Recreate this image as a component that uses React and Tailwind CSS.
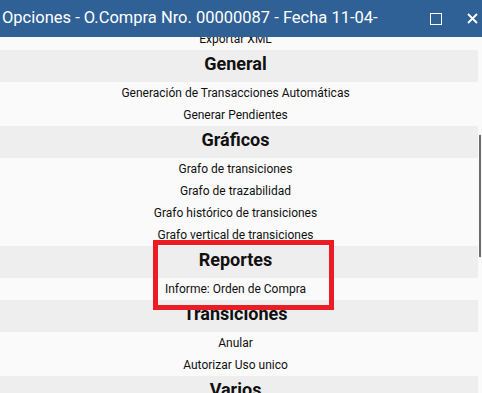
import React from "react";

const sections = [
  { title: null, items: ["Exportar XML"] },
  { title: "General", items: ["Generación de Transacciones Automáticas", "Generar Pendientes"] },
  {
    title: "Gráficos",
    items: [
      "Grafo de transiciones",
      "Grafo de trazabilidad",
      "Grafo histórico de transiciones",
      "Grafo vertical de transiciones",
    ],
  },
  { title: "Reportes", items: ["Informe: Orden de Compra"] },
  { title: "Transiciones", items: ["Anular", "Autorizar Uso unico"] },
  { title: "Varios", items: ["Copiar"] },
];

export default function App() {
  return (
    <div className="relative w-[482px] h-[393px] overflow-hidden bg-[#fafafa] font-['Roboto',sans-serif]">
      {/* title bar */}
      <div className="h-[37px] bg-[#2f6096] flex items-center pl-[2px] text-white">
        <span className="flex-1 text-[16.5px] whitespace-nowrap overflow-hidden">
          Opciones - O.Compra Nro. 00000087 - Fecha 11-04-
        </span>
        <div className="w-[12px] h-[12px] border-[1.5px] border-white mr-[25px]" />
        <svg width="11" height="11" viewBox="0 0 11 11" className="mr-[4px]">
          <path d="M1 1 L10 10 M10 1 L1 10" stroke="white" strokeWidth="1.8" />
        </svg>
      </div>

      {/* list */}
      <div className="relative h-[356px] overflow-hidden">
        <div className="w-[478px] -mt-[9px]">
          {sections.map((s, i) => (
            <div key={i}>
              {s.title && (
                <div className="h-[32px] bg-[#eeeeee] flex items-center justify-center pb-[5px] pr-[7px] text-[18px] font-bold text-[#111]">
                  {s.title}
                </div>
              )}
              {s.items.map((it) => (
                <div key={it} className="h-[22px] flex items-center justify-center pr-[7px] text-[12px] text-[#111]">
                  {it}
                </div>
              ))}
            </div>
          ))}
        </div>
        {/* scrollbar */}
        <div className="absolute right-[1px] top-[98px] w-[2px] h-[122px] bg-[#6b6b6b]" />
      </div>

      {/* highlight annotation */}
      <div className="absolute left-[153px] top-[240px] w-[181px] h-[70px] border-[5px] border-[#ec1c24]" />
    </div>
  );
}
